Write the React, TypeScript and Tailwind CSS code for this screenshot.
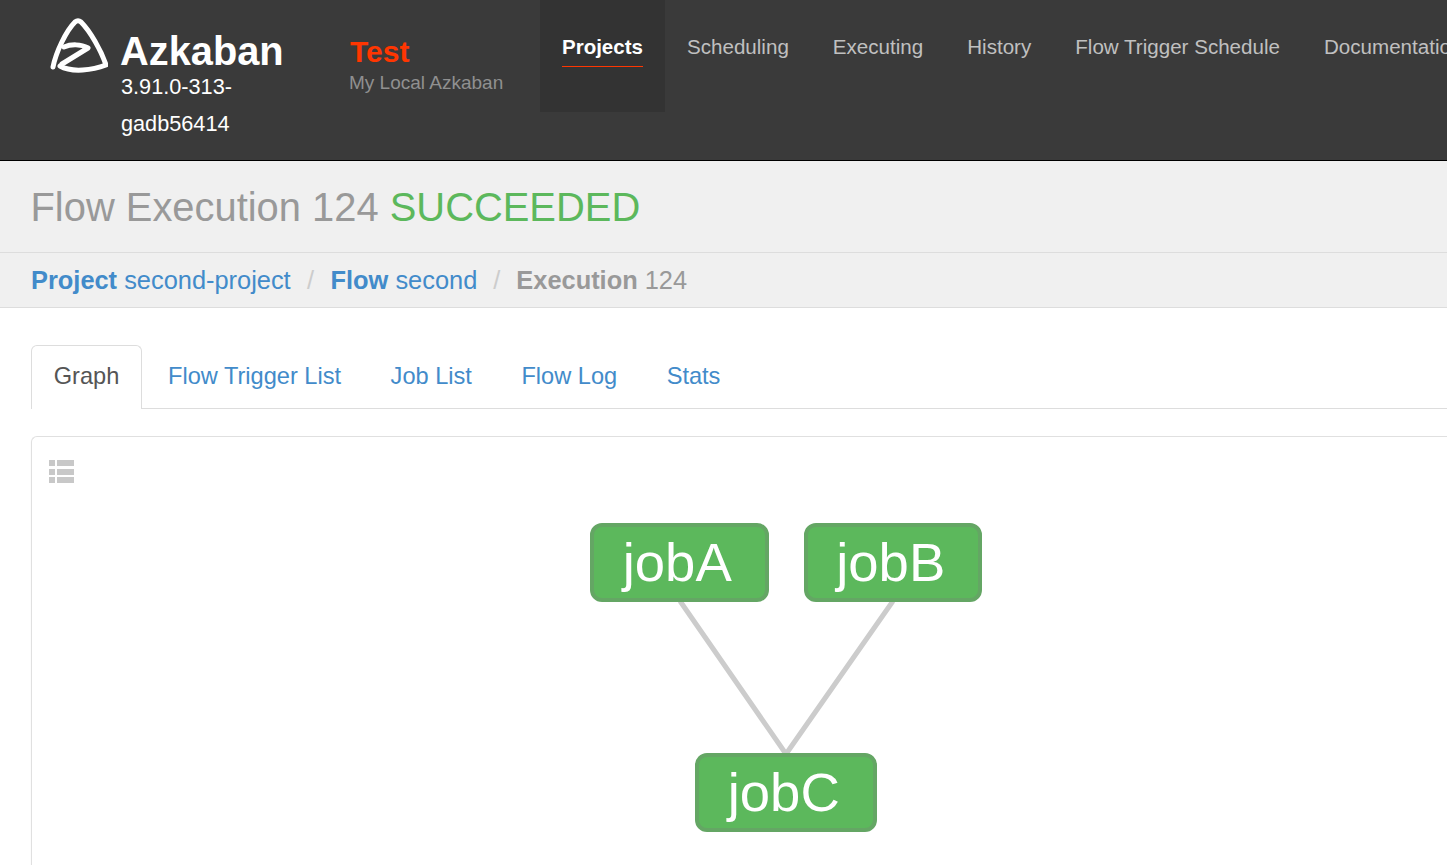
const navItems = ["Scheduling", "Executing", "History", "Flow Trigger Schedule", "Documentation"];
const tabs = ["Flow Trigger List", "Job List", "Flow Log", "Stats"];

const nodes = [
  { label: "jobA", className: "left-[558px] top-[86px] w-[178.5px]" },
  { label: "jobB", className: "left-[771.5px] top-[86px] w-[178.5px]" },
  { label: "jobC", className: "left-[663px] top-[316px] w-[181.5px]" },
];

function Logo() {
  return (
    <svg width="60" height="58" viewBox="0 0 60 58" className="-ml-[2px] mr-[2px] shrink-0 blur-[0.5px]" aria-hidden="true">
      <g fill="none" stroke="#fff" strokeLinecap="round" strokeLinejoin="round" strokeWidth="5">
        <path d="M5 50 C8 35 18 14 27 5 Q30 2.5 33 5 C42 14 53 33 58 48 C45 53 24 56 12 49" />
        <path d="M16 30 C23 27 33 27 40 31 L14 47" />
      </g>
    </svg>
  );
}

function ListIcon() {
  return (
    <svg width="26" height="24" viewBox="0 0 26 24" fill="#c8c8c8" aria-hidden="true">
      <rect x="0" y="0" width="6" height="6" />
      <rect x="8" y="0" width="17" height="6" />
      <rect x="0" y="9" width="6" height="6" />
      <rect x="8" y="9" width="17" height="6" />
      <rect x="0" y="17" width="6" height="6" />
      <rect x="8" y="17" width="17" height="6" />
    </svg>
  );
}

export default function App() {
  return (
    <div className="h-[865px] overflow-hidden bg-white font-['Liberation_Sans',Arial,sans-serif]">
      {/* Top nav */}
      <header className="flex h-[161px] items-start overflow-hidden border-b border-black bg-[#3a3a3a]">
        <div className="ml-[50px] mt-[17px] flex w-[299px] shrink-0 items-start">
          <Logo />
          <div className="ml-[11px] w-[170px]">
            <div className="mt-[17px] -ml-px text-[39.8px] font-bold leading-[34px] text-white">Azkaban</div>
            <div className="text-[21.7px] leading-[37px] text-white">3.91.0-313-<br />gadb56414</div>
          </div>
        </div>
        <div className="mt-[34px] w-[191px] shrink-0">
          <div className="pl-px text-[30px] font-bold leading-[36px] text-[#ff3601]">Test</div>
          <div className="mt-px text-[19px] leading-[24px] text-[#909090]">My Local Azkaban</div>
        </div>
        <nav className="flex shrink-0">
          <a className="h-[112px] w-[125px] bg-[#333] px-[22px] pt-[34px] text-[20.5px] font-bold text-white">
            <span className="block border-b border-[#ff3601] pb-[6px] leading-[26px]">Projects</span>
          </a>
          {navItems.map((item) => (
            <a key={item} className="whitespace-nowrap px-[22px] pt-[34px] text-[20.58px] leading-[26px] text-[#c0c0c0]">
              {item}
            </a>
          ))}
        </nav>
      </header>

      {/* Page title */}
      <div className="flex h-[92px] items-center border-b border-[#ddd] bg-[#f0f0f0] pl-[31px] text-[39.9px] leading-[46px] text-[#999]">
        <h1 className="-ml-[0.5px]">
          Flow Execution 124 <span className="text-[#5cb85c]">SUCCEEDED</span>
        </h1>
      </div>

      {/* Breadcrumb */}
      <div className="flex h-[55px] items-center border-b border-[#ddd] bg-[#f0f0f0] pl-[31px] text-[25.4px] text-[#999]">
        <a className="text-[#428bca]"><b>Project</b> second-project</a>
        <span className="px-[16.4px] text-[#ccc]">/</span>
        <a className="text-[#428bca]"><b>Flow</b> second</a>
        <span className="px-[16px] text-[#ccc]">/</span>
        <span><b>Execution</b> 124</span>
      </div>

      {/* Tabs */}
      <div className="ml-[31px] mt-[37px] flex h-[64px] items-stretch border-b border-[#ddd] text-[23.6px]">
        <a className="-mb-px flex w-[111px] items-center justify-center rounded-t-[6px] border border-b-0 border-[#ddd] bg-white pb-[2px] text-[#555]">
          Graph
        </a>
        <div className="ml-[1.25px] flex">
          {tabs.map((tab) => (
            <a key={tab} className="flex items-center px-[24.75px] text-[#428bca]">
              {tab}
            </a>
          ))}
        </div>
      </div>

      {/* Graph panel */}
      <div className="relative ml-[31px] mt-[27px] h-[500px] rounded-tl-[6px] border-l border-t border-[#e0e0e0] shadow-[0_1px_2px_rgba(0,0,0,0.05)]">
        <div className="absolute left-[17px] top-[23px] flex">
          <ListIcon />
        </div>
        <svg className="absolute left-0 top-0" width="1000" height="420" aria-hidden="true">
          <path d="M648 164 L754 317 L861 164" fill="none" stroke="#ccc" strokeWidth="5" />
        </svg>
        {nodes.map((node) => (
          <div
            key={node.label}
            className={`absolute flex h-[79px] items-center justify-center rounded-[12px] border-[4px] border-[#64a664] bg-[#5cb85c] pr-[4px] text-[54.5px] text-white ${node.className}`}
          >
            {node.label}
          </div>
        ))}
      </div>
    </div>
  );
}
